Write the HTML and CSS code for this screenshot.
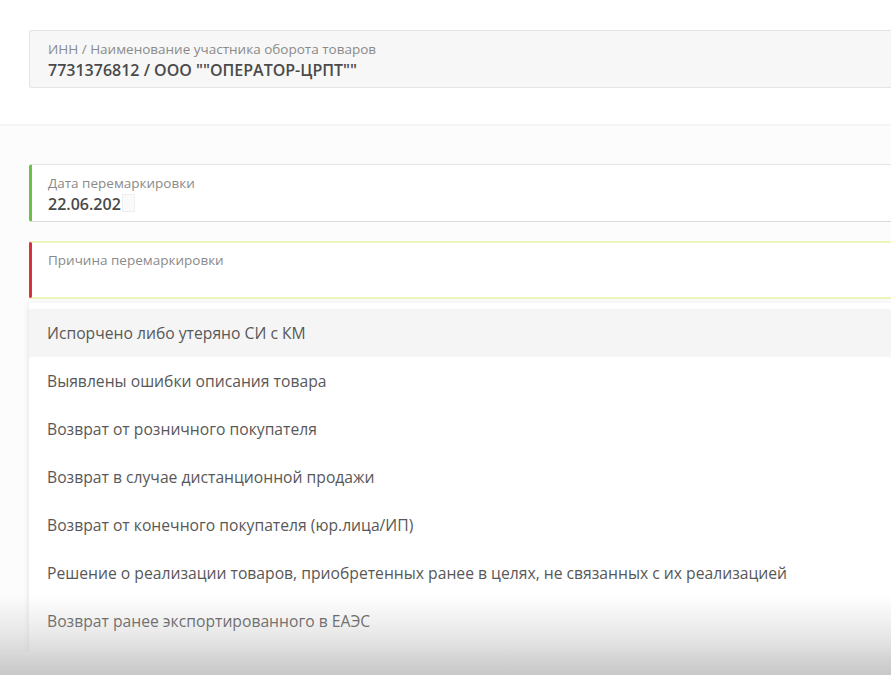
FILE: index.html
```html
<!DOCTYPE html>
<html lang="ru">
<head>
    <meta charset="UTF-8">
    <meta name="viewport" content="width=device-width, initial-scale=1.0">
    <title>Перемаркировка</title>
    <link rel="stylesheet" href="styles.css">
</head>
<body>
    <div class="top">
        <div class="field field-readonly">
            <div class="label">ИНН / Наименование участника оборота товаров</div>
            <div class="value">7731376812 / ООО ""ОПЕРАТОР-ЦРПТ""</div>
        </div>
    </div>

    <div class="main">
        <div class="field field-ok">
            <div class="label">Дата перемаркировки</div>
            <div class="value">22.06.202<span class="mask"></span></div>
        </div>

        <div class="field field-error">
            <div class="label">Причина перемаркировки</div>
            <div class="value"></div>
        </div>

        <ul class="dropdown">
            <li class="active">Испорчено либо утеряно СИ с КМ</li>
            <li>Выявлены ошибки описания товара</li>
            <li>Возврат от розничного покупателя</li>
            <li>Возврат в случае дистанционной продажи</li>
            <li>Возврат от конечного покупателя (юр.лица/ИП)</li>
            <li>Решение о реализации товаров, приобретенных ранее в целях, не связанных с их реализацией</li>
            <li>Возврат ранее экспортированного в ЕАЭС</li>
        </ul>
    </div>

    <div class="shade"></div>
</body>
</html>
```

FILE: styles.css
```css
body { margin: 0; font-family: "Open Sans", "Noto Sans", sans-serif; background-color: #fcfcfc; color: #444; overflow: hidden; }
.top { background-color: #fff; padding: 30px 0 36px 29px; border-bottom: 2px solid #f4f4f4; }
.main { padding: 38px 0 0 29px; }
.field { height: 58px; box-sizing: border-box; padding: 9px 0 0 18px; border: 1px solid #e4e4e4; border-right: none; border-radius: 3px 0 0 3px; background-color: #fff; }
.field-readonly { background-color: #f7f7f7; }
.field-ok { border-left: 3px solid #6cc04a; padding-left: 16px; border-bottom-color: #d8d8de; }
.field-error { margin-top: 19px; border-left: 3px solid #d8323c; padding-left: 16px; border-top: 2px solid #eef5b8; border-bottom: 2px solid #eef5b8; padding-top: 8px; }
.label { font-size: 13.5px; color: #8a8a8a; line-height: 18px; height: 18px; }
.value { font-size: 16px; font-weight: 600; color: #4a4a4a; line-height: 24px; height: 24px; }
.mask { display: inline-block; width: 11px; height: 16px; margin-left: 1px; vertical-align: -2px; background-color: #fafafa; border: 1px solid #efefef; }
.dropdown { list-style: none; margin: 4px 0 0 0; padding: 6px 0 6px 0; background-color: #fff; box-shadow: 0 2px 6px rgba(0, 0, 0, 0.12); }
.dropdown li { height: 48px; line-height: 48px; padding-left: 18px; font-size: 15.7px; color: #585858; white-space: nowrap; }
.dropdown li.active { background-color: #f5f5f5; }
.shade { position: fixed; left: 0; right: 0; bottom: 0; height: 80px; background: linear-gradient(to bottom, rgba(190, 190, 190, 0), rgba(190, 190, 190, 0.35) 50%, rgba(190, 190, 190, 0.85)); pointer-events: none; }
```
